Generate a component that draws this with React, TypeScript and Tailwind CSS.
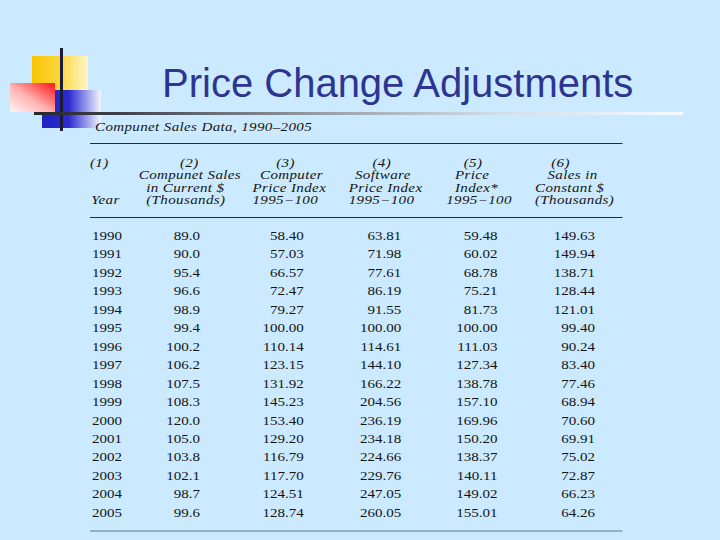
import React from "react";

const rows: string[][] = [
  ["1990", "89.0", "58.40", "63.81", "59.48", "149.63"],
  ["1991", "90.0", "57.03", "71.98", "60.02", "149.94"],
  ["1992", "95.4", "66.57", "77.61", "68.78", "138.71"],
  ["1993", "96.6", "72.47", "86.19", "75.21", "128.44"],
  ["1994", "98.9", "79.27", "91.55", "81.73", "121.01"],
  ["1995", "99.4", "100.00", "100.00", "100.00", "99.40"],
  ["1996", "100.2", "110.14", "114.61", "111.03", "90.24"],
  ["1997", "106.2", "123.15", "144.10", "127.34", "83.40"],
  ["1998", "107.5", "131.92", "166.22", "138.78", "77.46"],
  ["1999", "108.3", "145.23", "204.56", "157.10", "68.94"],
  ["2000", "120.0", "153.40", "236.19", "169.96", "70.60"],
  ["2001", "105.0", "129.20", "234.18", "150.20", "69.91"],
  ["2002", "103.8", "116.79", "224.66", "138.37", "75.02"],
  ["2003", "102.1", "117.70", "229.76", "140.11", "72.87"],
  ["2004", "98.7", "124.51", "247.05", "149.02", "66.23"],
  ["2005", "99.6", "128.74", "260.05", "155.01", "64.26"],
];

type Line = { t: string; c: string };
const header: Line[][] = [
  [
    { t: "(1)", c: "pl-0" },
    { t: "\u00a0", c: "pl-0" },
    { t: "\u00a0", c: "pl-0" },
    { t: "Year", c: "pl-[1px]" },
  ],
  [
    { t: "(2)", c: "pl-[37px]" },
    { t: "Compunet Sales", c: "pl-[4px]" },
    { t: "in Current $", c: "pl-[10px]" },
    { t: "(Thousands)", c: "pl-[10px]" },
  ],
  [
    { t: "(3)", c: "pl-[24px]" },
    { t: "Computer", c: "pl-[11px]" },
    { t: "Price Index", c: "pl-[5px]" },
    { t: "1995\u2212100", c: "pl-[5px]" },
  ],
  [
    { t: "(4)", c: "pl-[26px]" },
    { t: "Software", c: "pl-[12px]" },
    { t: "Price Index", c: "pl-[7px]" },
    { t: "1995\u2212100", c: "pl-[7px]" },
  ],
  [
    { t: "(5)", c: "pl-[19px]" },
    { t: "Price", c: "pl-[12px]" },
    { t: "Index*", c: "pl-[12px]" },
    { t: "1995\u2212100", c: "pl-[5px]" },
  ],
  [
    { t: "(6)", c: "pl-[19px]" },
    { t: "Sales in", c: "pl-[16px]" },
    { t: "Constant $", c: "pl-[6px]" },
    { t: "(Thousands)", c: "pl-[6px]" },
  ],
];

function Logo() {
  return (
    <svg className="absolute left-0 top-0" width="110" height="140" viewBox="0 0 110 140">
      <defs>
        <linearGradient id="yel" x1="0" y1="0" x2="1" y2="0">
          <stop offset="0" stopColor="#f8c400" />
          <stop offset="0.5" stopColor="#fcd640" />
          <stop offset="1" stopColor="#fff6c8" />
        </linearGradient>
        <linearGradient id="blu" x1="0" y1="0" x2="1" y2="0">
          <stop offset="0" stopColor="#2222c2" />
          <stop offset="0.45" stopColor="#2a2ad0" />
          <stop offset="1" stopColor="#f4f6ff" />
        </linearGradient>
        <linearGradient id="red" x1="0" y1="1" x2="1" y2="0">
          <stop offset="0" stopColor="#fff6f6" />
          <stop offset="0.45" stopColor="#ffb4b4" />
          <stop offset="1" stopColor="#ff1414" />
        </linearGradient>
      </defs>
      <rect x="32" y="56" width="56" height="40" fill="url(#yel)" />
      <rect x="42" y="90" width="59" height="38" fill="url(#blu)" />
      <rect x="10" y="83" width="45" height="29" fill="url(#red)" />
      <rect x="60" y="48" width="3" height="83" fill="#1c1c34" />
    </svg>
  );
}

export default function App() {
  return (
    <div className="relative w-[720px] h-[540px] overflow-hidden bg-[#cceaff] font-['Liberation_Sans',Arial,sans-serif]">
      <Logo />
      <div className="relative pt-[63px] pl-[162px] text-[40px] leading-[40px] text-[#2d3591] whitespace-nowrap">
        Price Change Adjustments
      </div>
      <div className="relative mt-[9px] ml-[34px] w-[649px] h-[3px] bg-[linear-gradient(to_right,#26262e_0%,#3c3e46_12%,#9aa0a8_45%,#d2dee9_72%,#f6fbff_100%)]" />
      <div className="ml-[90px] w-[426.4px] origin-top-left scale-x-125 font-['Liberation_Serif','Times_New_Roman',serif] text-[#141414]">
        <div className="mt-[5px] pl-[4px] text-[12px] leading-[14px] italic tracking-[0.3px] whitespace-nowrap">
          Compunet Sales Data, 1990–2005
        </div>
        <div className="mt-[9px] h-px bg-[#2a2a2a]" />
        <div className="mt-[12.5px] grid grid-cols-[35px_90px_75px_80px_70px_76.4px] text-[12px] leading-[12.5px] italic tracking-[0.3px]">
          {header.map((col, i) => (
            <div key={i} className="flex flex-col">
              {col.map((l, j) => (
                <div key={j} className={`${l.c} whitespace-nowrap`}>
                  {l.t}
                </div>
              ))}
            </div>
          ))}
        </div>
        <div className="mt-[10.5px] h-px bg-[#2a2a2a]" />
        <div className="mt-[9px] flex flex-col text-[12px] leading-[18.45px]">
          {rows.map((r) => (
            <div key={r[0]} className="grid grid-cols-[40px_48px_83px_78px_77px_78px_1fr]">
              <div className="pl-[1.6px]">{r[0]}</div>
              <div className="text-right">{r[1]}</div>
              <div className="text-right">{r[2]}</div>
              <div className="text-right">{r[3]}</div>
              <div className="text-right">{r[4]}</div>
              <div className="text-right">{r[5]}</div>
              <div />
            </div>
          ))}
        </div>
        <div className="mt-[8px] h-[2px] bg-[#93b0c6]" />
      </div>
    </div>
  );
}
